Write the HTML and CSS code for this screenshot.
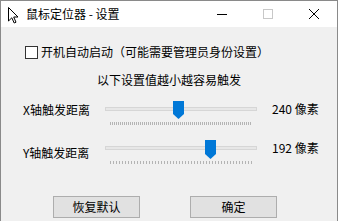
FILE: index.html
```html
<!DOCTYPE html>
<html lang="zh-CN">

<head>
    <meta charset="UTF-8">
    <title>鼠标定位器 - 设置</title>
    <link rel="stylesheet" href="styles.css">
</head>

<body>
    <div class="window">
        <div class="titlebar">
            <svg class="app-icon" width="12" height="18" viewBox="0 0 12 18">
                <path d="M1.5 1.5 L1.5 15 L4.8 11.8 L7.2 17 L9 16.2 L6.7 11 L11 11 Z" fill="#fff" stroke="#000" stroke-width="1" stroke-linejoin="miter" />
            </svg>
            <span class="title">鼠标定位器 - 设置</span>
            <div class="caption">
                <div class="cap-btn">
                    <svg width="10" height="10" viewBox="0 0 10 10"><path d="M0 5.5 H10" stroke="#000" stroke-width="1" /></svg>
                </div>
                <div class="cap-btn">
                    <svg width="10" height="10" viewBox="0 0 10 10"><rect x="0.5" y="0.5" width="9" height="9" fill="none" stroke="#c8c8c8" stroke-width="1" /></svg>
                </div>
                <div class="cap-btn">
                    <svg width="10" height="10" viewBox="0 0 10 10"><path d="M0 0 L10 10 M10 0 L0 10" stroke="#000" stroke-width="1" /></svg>
                </div>
            </div>
        </div>

        <div class="content">
            <label class="autostart">
                <span class="check"></span>
                开机自动启动（可能需要管理员身份设置）
            </label>

            <div class="note">以下设置值越小越容易触发</div>

            <div class="row row-x">
                <div class="label">X轴触发距离</div>
                <div class="slider">
                    <div class="track"></div>
                    <div class="ticks"></div>
                    <svg class="thumb" style="left: 68px" width="11" height="18" viewBox="0 0 11 18">
                        <polygon points="0,0 11,0 11,13 5.5,18 0,13" fill="#0078d7" />
                    </svg>
                </div>
                <div class="value">240 像素</div>
            </div>

            <div class="row row-y">
                <div class="label">Y轴触发距离</div>
                <div class="slider">
                    <div class="track"></div>
                    <div class="ticks sparse"></div>
                    <svg class="thumb" style="left: 100px" width="11" height="19" viewBox="0 0 11 19">
                        <polygon points="0,0 11,0 11,14 5.5,19 0,14" fill="#0078d7" />
                    </svg>
                </div>
                <div class="value">192 像素</div>
            </div>

            <div class="buttons">
                <div class="btn">恢复默认</div>
                <div class="btn">确定</div>
            </div>
        </div>
    </div>
</body>

</html>
```

FILE: styles.css
```css
body {
    margin: 0;
    width: 338px;
    height: 221px;
    overflow: hidden;
    font-family: "Noto Sans CJK SC", "Liberation Sans", sans-serif;
    font-size: 12px;
    color: #000;
}

.window {
    height: 221px;
    border: 1px solid #8a8a8a;
    border-bottom: none;
    box-sizing: border-box;
    background-color: #f0f0f0;
}

.titlebar {
    height: 26px;
    background-color: #fff;
    display: flex;
    align-items: center;
}

.app-icon {
    margin-left: 6px;
    margin-top: 1px;
}

.title {
    margin-left: 7px;
    line-height: 16px;
}

.caption {
    margin-left: auto;
    display: flex;
    height: 26px;
}

.cap-btn {
    width: 46px;
    height: 26px;
    display: flex;
    justify-content: center;
    align-items: center;
}

.content {
    padding-top: 17px;
}

.autostart {
    display: flex;
    align-items: center;
    height: 16px;
    margin-left: 24px;
    line-height: 16px;
}

.check {
    width: 11px;
    height: 11px;
    border: 1px solid #333;
    background-color: #fff;
    margin-right: 3px;
}

.note {
    margin-top: 12px;
    height: 16px;
    line-height: 16px;
    text-align: center;
}

.row {
    display: flex;
    align-items: flex-start;
    height: 26px;
}

.row-x {
    margin-top: 13px;
}

.row-y {
    margin-top: 13px;
}

.label {
    width: 82px;
    margin-left: 22px;
    line-height: 16px;
    padding-top: 1px;
}

.row-y .label {
    padding-top: 5px;
}

.slider {
    position: relative;
    width: 152px;
    height: 26px;
}

.track {
    margin-top: 6px;
    height: 2px;
    background-color: #e7e7e7;
    border: 1px solid #d6d6d6;
}

.ticks {
    margin-top: 11px;
    margin-left: 5px;
    width: 142px;
    height: 3px;
    background: repeating-linear-gradient(to right, #b4b4b4 0, #b4b4b4 1px, transparent 1px, transparent 2px);
}

.ticks.sparse {
    background: repeating-linear-gradient(to right, #b4b4b4 0, #b4b4b4 1px, transparent 1px, transparent 3px);
}

.thumb {
    position: absolute;
    top: 0;
}

.value {
    margin-left: 15px;
    line-height: 16px;
    padding-top: 0;
}

.buttons {
    display: flex;
    margin-top: 30px;
    margin-left: 52px;
    gap: 50px;
}

.btn {
    width: 85px;
    height: 20px;
    line-height: 20px;
    text-align: center;
    background-color: #e1e1e1;
    border: 1px solid #adadad;
}
```
